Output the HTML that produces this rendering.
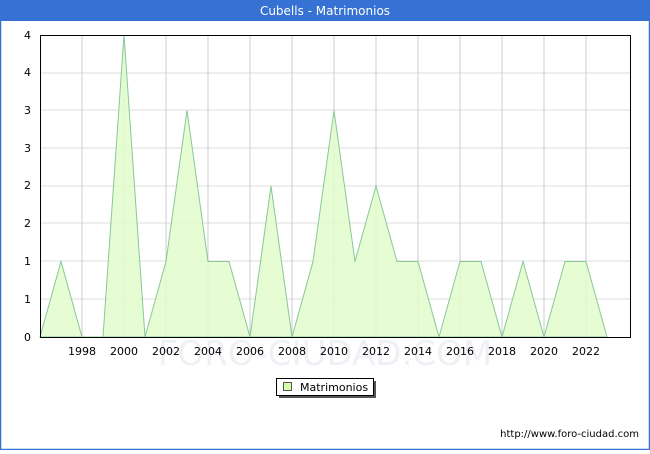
<!DOCTYPE html><html><head><style>body{margin:0;width:650px;height:450px;overflow:hidden;background:#fff;font-family:"DejaVu Sans","Liberation Sans",sans-serif}</style></head><body>
<svg width="650" height="450" xmlns="http://www.w3.org/2000/svg" font-family="DejaVu Sans, Liberation Sans, sans-serif">
<rect x="0.5" y="0.5" width="649" height="449" fill="#fff" stroke="#3572d4" stroke-width="1.5"/>
<rect x="0" y="0" width="650" height="21" fill="#3572d4"/>
<text x="325" y="15" font-size="12" fill="#fff" text-anchor="middle">Cubells - Matrimonios</text>
<text x="325" y="365" font-size="34" fill="#eef0f6" text-anchor="middle">FORO-CIUDAD.COM</text>
<g stroke="#dcdcdc" stroke-width="1">
<line x1="40" x2="630" y1="299" y2="299"/><line x1="40" x2="630" y1="261" y2="261"/><line x1="40" x2="630" y1="223" y2="223"/><line x1="40" x2="630" y1="186" y2="186"/><line x1="40" x2="630" y1="148" y2="148"/><line x1="40" x2="630" y1="110" y2="110"/><line x1="40" x2="630" y1="73" y2="73"/>
</g>
<g stroke="#cccccc" stroke-width="1">
<line x1="82" x2="82" y1="35" y2="337"/><line x1="124" x2="124" y1="35" y2="337"/><line x1="166" x2="166" y1="35" y2="337"/><line x1="208" x2="208" y1="35" y2="337"/><line x1="250" x2="250" y1="35" y2="337"/><line x1="292" x2="292" y1="35" y2="337"/><line x1="334" x2="334" y1="35" y2="337"/><line x1="376" x2="376" y1="35" y2="337"/><line x1="418" x2="418" y1="35" y2="337"/><line x1="460" x2="460" y1="35" y2="337"/><line x1="502" x2="502" y1="35" y2="337"/><line x1="544" x2="544" y1="35" y2="337"/><line x1="586" x2="586" y1="35" y2="337"/>
</g>
<polygon fill="#e2fccb" fill-opacity="0.85" stroke="#88c898" stroke-width="1" points="40,337 61,261.5 82,337 103,337 124,35 145,337 166,261.5 187,110.5 208,261.5 229,261.5 250,337 271,186 292,337 313,261.5 334,110.5 355,261.5 376,186 397,261.5 418,261.5 439,337 460,261.5 481,261.5 502,337 523,261.5 544,337 565,261.5 586,261.5 607,337"/>
<rect x="40.5" y="35.5" width="590" height="302" fill="none" stroke="#000" stroke-width="1"/>
<g font-size="11" fill="#000" text-anchor="end">
<text x="31" y="341">0</text><text x="31" y="303">1</text><text x="31" y="265">1</text><text x="31" y="227">2</text><text x="31" y="189">2</text><text x="31" y="152">3</text><text x="31" y="114">3</text><text x="31" y="76">4</text><text x="31" y="39">4</text>
</g>
<g font-size="11" fill="#000" text-anchor="middle">
<text x="82" y="355">1998</text><text x="124" y="355">2000</text><text x="166" y="355">2002</text><text x="208" y="355">2004</text><text x="250" y="355">2006</text><text x="292" y="355">2008</text><text x="334" y="355">2010</text><text x="376" y="355">2012</text><text x="418" y="355">2014</text><text x="460" y="355">2016</text><text x="502" y="355">2018</text><text x="544" y="355">2020</text><text x="586" y="355">2022</text>
</g>
<rect x="279" y="381" width="97" height="17" fill="#555"/>
<rect x="276.5" y="378.5" width="97" height="17" fill="#fff" stroke="#000"/>
<rect x="283.5" y="382.5" width="8" height="8" fill="#d4fcaa" stroke="#555"/>
<text x="300" y="391" font-size="11">Matrimonios</text>
<text x="639" y="437" font-size="10" text-anchor="end">http://www.foro-ciudad.com</text>
</svg>
</body></html>
